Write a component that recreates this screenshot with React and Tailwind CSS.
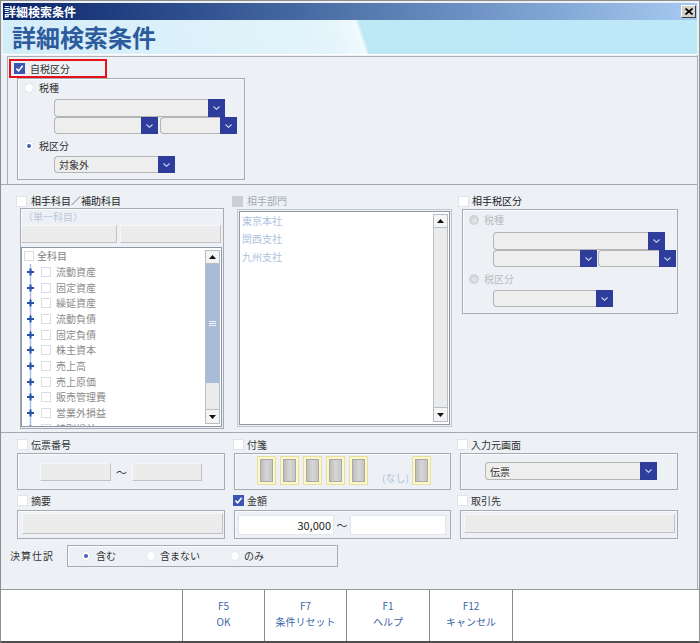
import React from 'react';

const Check = ({ checked, disabled }) => {
  if (checked) {
    return (
      <span className="w-[11px] h-[11px] shrink-0 bg-[#3c54b2] flex items-center justify-center">
        <svg width="9" height="9" viewBox="0 0 9 9">
          <polyline points="1.4,4.6 3.6,6.9 7.7,1.8" fill="none" stroke="#fff" strokeWidth="1.6" />
        </svg>
      </span>
    );
  }
  return (
    <span
      className={
        disabled
          ? 'w-[11px] h-[11px] shrink-0 bg-[#cbced2]'
          : 'w-[11px] h-[11px] shrink-0 bg-white border border-[#e0e3e8]'
      }
    />
  );
};

const Radio = ({ checked, disabled }) => (
  <span
    className={
      disabled
        ? 'w-[10px] h-[10px] shrink-0 rounded-full bg-[#d2d4d8] flex items-center justify-center'
        : 'w-[10px] h-[10px] shrink-0 rounded-full bg-white border border-[#e3e6ea] flex items-center justify-center'
    }
  >
    {checked && <span className="w-[4px] h-[4px] rounded-full bg-[#4a5cb8]" />}
    {disabled && <span className="w-[5px] h-[5px] rounded-full bg-[#e1e2e5]" />}
  </span>
);

const Label = ({ children, className = '' }) => (
  <span className={`text-[10px] leading-[12px] whitespace-nowrap ${className}`}>{children}</span>
);

const Combo = ({ className, text }) => (
  <div className={`flex ${className}`}>
    <div className="flex-1 min-w-0 bg-[#eeeeee] border border-r-0 border-[#b4b4b4] rounded-l-[4px] pl-[4px] flex items-center text-[10px] text-[#333]">
      {text}
    </div>
    <div className="w-[17px] shrink-0 bg-[#2e3d9c] flex items-center justify-center">
      <svg width="7" height="4" viewBox="0 0 7 4">
        <polyline points="0.5,0.5 3.5,3.3 6.5,0.5" fill="none" stroke="#cfd6f2" strokeWidth="1.1" />
      </svg>
    </div>
  </div>
);

const Group = ({ className, children }) => (
  <div className={`border border-[#a5abb2] shadow-[inset_1px_1px_0_#fbfcfd] ${className}`}>{children}</div>
);

const GrayInput = ({ className }) => (
  <div className={`bg-[#ececec] border border-[#f7f7f7] border-r-[#c2c2c2] border-b-[#c2c2c2] ${className}`} />
);

const Arrow = ({ up }) => (
  <svg width="7" height="4" viewBox="0 0 7 4">
    <polygon points={up ? '0,4 7,4 3.5,0' : '0,0 7,0 3.5,4'} fill="#111" />
  </svg>
);

const ScrollBar = ({ thumb }) => (
  <div className="w-[15px] my-[2px] mr-[1px] border border-[#b7bec7] bg-[#ebebeb] flex flex-col">
    <div className="h-[13px] border-b border-[#b7bec7] bg-[#f4f4f4] flex items-center justify-center">
      <Arrow up />
    </div>
    {thumb ? (
      <>
        <div className="h-[119px] bg-[#a9bcd7] flex flex-col items-center justify-center gap-[1px]">
          <span className="w-[7px] h-px bg-[#eef3fa]" />
          <span className="w-[7px] h-px bg-[#eef3fa]" />
          <span className="w-[7px] h-px bg-[#eef3fa]" />
        </div>
        <div className="flex-1" />
      </>
    ) : (
      <div className="flex-1" />
    )}
    <div className="h-[14px] border-t border-[#b7bec7] bg-[#f4f4f4] flex items-center justify-center">
      <Arrow />
    </div>
  </div>
);

const Tag = () => (
  <div className="w-[19px] h-[29px] bg-[#fcf8c8] border border-[#e6dea2] p-[2px]">
    <div className="h-full bg-linear-to-r from-[#bdbdbd] via-[#d6d6d6] to-[#c6c6c6] border border-[#a9a9a9]" />
  </div>
);

const accounts = [
  '流動資産',
  '固定資産',
  '繰延資産',
  '流動負債',
  '固定負債',
  '株主資本',
  '売上高',
  '売上原価',
  '販売管理費',
  '営業外損益',
  '特別損益',
];

const footerButtons = [
  { key: 'F5', label: 'OK', w: 'w-[82px]' },
  { key: 'F7', label: '条件リセット', w: 'w-[82px]' },
  { key: 'F1', label: 'ヘルプ', w: 'w-[83px]' },
  { key: 'F12', label: 'キャンセル', w: 'w-[83px]' },
];

export default function App() {
  return (
    <div className="w-[700px] h-[643px] bg-[#edf1f5] border border-[#8f8f8f] border-b-2 border-b-[#4f4f4f] flex flex-col overflow-hidden font-['Noto_Sans_CJK_JP','Noto_Sans',sans-serif] text-[#333]">
      {/* title bar */}
      <div className="mx-[2px] mt-[2px] h-[17px] shrink-0 bg-linear-to-r from-[#0a246a] to-[#a6caf0] flex items-center justify-between pl-[1px] pr-[1px]">
        <span className="text-white text-[12px] font-bold leading-[17px]">詳細検索条件</span>
        <div className="w-[15px] h-[13px] bg-[#d4d0c8] border border-t-white border-l-white border-r-[#404040] border-b-[#404040] flex items-center justify-center">
          <svg width="8" height="7" viewBox="0 0 8 7">
            <path d="M0.5 0.5 L7.5 6.5 M7.5 0.5 L0.5 6.5" stroke="#000" strokeWidth="1.6" />
          </svg>
        </div>
      </div>

      {/* header */}
      <div className="mx-[2px] h-[35px] shrink-0 border-b border-white bg-[linear-gradient(72deg,#d3edf9_0%,#e3f4fb_47%,#f1fafd_51.5%,#bfe8f7_52%,#bde8f7_100%)] flex items-center pl-[9px]">
        <span className="text-[24px] font-bold text-[#2d5c9c] leading-none">詳細検索条件</span>
      </div>

      {/* body */}
      <div className="h-[534px] shrink-0 flex flex-col mr-[1px] border-r border-[#a9afb6]">
        {/* section 1 */}
        <div className="h-[129px] pl-[6px] pt-[1px] flex flex-col">
          <div className="flex-1 border-l border-t border-[#a9afb6] flex flex-col">
            <div className="ml-[1px] mt-[2px] w-[98px] h-[19px] border-2 border-[#e3121b] flex items-center pl-[3px] gap-[5px]">
              <Check checked />
              <Label>自税区分</Label>
            </div>
            <Group className="ml-[9px] w-[228px] h-[102px] flex flex-col pl-[6px]">
              <div className="mt-[2px] h-[14px] flex items-center gap-[5px]">
                <Radio />
                <Label>税種</Label>
              </div>
              <Combo className="ml-[30px] mt-[4px] w-[171px] h-[18px]" />
              <div className="ml-[30px] h-[17px] flex gap-[2px]">
                <Combo className="w-[104px] h-[17px]" />
                <Combo className="w-[77px] h-[17px]" />
              </div>
              <div className="mt-[5px] h-[14px] flex items-center gap-[5px]">
                <Radio checked />
                <Label>税区分</Label>
              </div>
              <Combo className="ml-[30px] mt-[3px] w-[121px] h-[17px]" text="対象外" />
            </Group>
          </div>
        </div>

        {/* section 2 */}
        <div className="h-[248px] border-t border-[#a3a9b0] flex">
          {/* accounts */}
          <div className="ml-[15px] w-[209px] flex flex-col">
            <div className="mt-[10px] h-[12px] flex items-center gap-[4px]">
              <Check />
              <Label className="text-[#222]">相手科目／補助科目</Label>
            </div>
            <Group className="ml-[4px] mt-[1px] w-[204px] h-[221px] flex flex-col">
              <div className="h-[16px] pl-[2px] text-[10px] leading-[16px] text-[#b9c8dc]">（単一科目）</div>
              <div className="h-[18px] flex gap-[3px]">
                <GrayInput className="w-[96px] h-[18px]" />
                <GrayInput className="w-[101px] h-[18px]" />
              </div>
              <div className="mt-[4px] h-[180px] mr-[1px] border border-[#8e98a4] bg-white flex">
                <div className="flex-1 overflow-hidden pl-[2px]">
                  <div className="h-[16px] flex items-center gap-[3px]">
                    <span className="w-[10px] h-[10px] border border-[#dadde2] bg-white" />
                    <span className="text-[10px] leading-[12px] text-[#7c7c7c]">全科目</span>
                  </div>
                  {accounts.map((name) => (
                    <div key={name} className="h-[15.7px] flex items-center">
                      <svg width="9" height="16" viewBox="0 0 9 16" className="ml-[2px] shrink-0">
                        <line x1="4.5" y1="0" x2="4.5" y2="16" stroke="#aac0e4" strokeWidth="1.5" />
                        <path d="M4.5 4.5 V11.5 M1 8 H8" stroke="#2553a8" strokeWidth="2" />
                      </svg>
                      <span className="ml-[6px] w-[10px] h-[10px] shrink-0 border border-[#dadde2] bg-white" />
                      <span className="ml-[5px] text-[10px] leading-[12px] text-[#8c8c8c] whitespace-nowrap">{name}</span>
                    </div>
                  ))}
                </div>
                <ScrollBar thumb />
              </div>
            </Group>
          </div>

          {/* departments */}
          <div className="ml-[7px] w-[220px] flex flex-col">
            <div className="mt-[10px] h-[12px] flex items-center gap-[4px]">
              <Check disabled />
              <Label className="text-[#a3abb6]">相手部門</Label>
            </div>
            <div className="ml-[5px] mt-[2px] w-[215px] h-[218px] border border-[#c3c8ce] p-px">
              <div className="h-full border border-[#8f98a3] bg-white flex">
                <div className="flex-1 pl-[2px]">
                  {['東京本社', '関西支社', '九州支社'].map((d) => (
                    <div key={d} className="h-[18px] text-[10px] leading-[18px] text-[#adc2de]">
                      {d}
                    </div>
                  ))}
                </div>
                <ScrollBar />
              </div>
            </div>
          </div>

          {/* tax class */}
          <div className="ml-[6px] w-[220px] flex flex-col">
            <div className="mt-[10px] h-[12px] flex items-center gap-[3px]">
              <Check />
              <Label className="text-[#222]">相手税区分</Label>
            </div>
            <Group className="ml-[4px] mt-[2px] w-[216px] h-[105px] flex flex-col pl-[6px]">
              <div className="mt-[3px] h-[14px] flex items-center gap-[5px]">
                <Radio disabled />
                <Label className="text-[#b9bcc1]">税種</Label>
              </div>
              <Combo className="ml-[24px] mt-[5px] w-[172px] h-[18px]" />
              <div className="ml-[24px] h-[17px] flex gap-[1px]">
                <Combo className="w-[104px] h-[17px]" />
                <Combo className="w-[78px] h-[17px]" />
              </div>
              <div className="mt-[5px] h-[14px] flex items-center gap-[5px]">
                <Radio disabled />
                <Label className="text-[#b9bcc1]">税区分</Label>
              </div>
              <Combo className="ml-[24px] mt-[4px] w-[120px] h-[17px]" />
            </Group>
          </div>
        </div>

        {/* section 3 */}
        <div className="h-[157px] border-t border-[#a3a9b0] flex flex-col">
          <div className="mt-[6px] flex">
            <div className="ml-[16px] w-[208px] flex flex-col">
              <div className="h-[11px] flex items-center gap-[3px]">
                <Check />
                <Label>伝票番号</Label>
              </div>
              <Group className="mt-[3px] h-[37px] flex items-center pl-[22px]">
                <GrayInput className="w-[71px] h-[18px]" />
                <span className="w-[21px] text-center text-[11px] leading-[12px]">～</span>
                <GrayInput className="w-[70px] h-[18px]" />
              </Group>
            </div>
            <div className="ml-[8px] w-[218px] flex flex-col">
              <div className="h-[11px] flex items-center gap-[3px]">
                <Check />
                <Label>付箋</Label>
              </div>
              <Group className="ml-px mt-[3px] w-[217px] h-[37px] flex items-start pt-[2px] pl-[22px]">
                <div className="flex gap-[4px]">
                  <Tag />
                  <Tag />
                  <Tag />
                  <Tag />
                  <Tag />
                </div>
                <span className="ml-[14px] mt-[16px] text-[10px] leading-[12px] text-[#adc2de]">(なし)</span>
                <div className="ml-[3px]">
                  <Tag />
                </div>
              </Group>
            </div>
            <div className="ml-[6px] w-[221px] flex flex-col">
              <div className="h-[11px] flex items-center gap-[3px]">
                <Check />
                <Label>入力元画面</Label>
              </div>
              <Group className="ml-[3px] mt-[3px] w-[218px] h-[37px] pl-[24px] pt-[8px]">
                <Combo className="w-[172px] h-[18px]" text="伝票" />
              </Group>
            </div>
          </div>

          <div className="mt-[5px] flex">
            <div className="ml-[16px] w-[208px] flex flex-col">
              <div className="h-[11px] flex items-center gap-[3px]">
                <Check />
                <Label>摘要</Label>
              </div>
              <Group className="mt-[4px] h-[29px] pl-[4px] pr-[1px] pt-[2px] pb-[4px]">
                <GrayInput className="h-full" />
              </Group>
            </div>
            <div className="ml-[8px] w-[218px] flex flex-col">
              <div className="h-[11px] flex items-center gap-[3px]">
                <Check checked />
                <Label>金額</Label>
              </div>
              <Group className="ml-px mt-[4px] w-[217px] h-[29px] flex items-center pl-[3px]">
                <div className="w-[96px] h-[20px] bg-white border border-[#e2e5e9] text-right pr-[2px] text-[11px] leading-[18px] text-[#222]">
                  30,000
                </div>
                <span className="w-[16px] text-center text-[11px] leading-[12px]">～</span>
                <div className="w-[96px] h-[20px] bg-white border border-[#e2e5e9]" />
              </Group>
            </div>
            <div className="ml-[6px] w-[221px] flex flex-col">
              <div className="h-[11px] flex items-center gap-[3px]">
                <Check />
                <Label>取引先</Label>
              </div>
              <Group className="ml-[3px] mt-[4px] w-[218px] h-[29px] pl-[3px] pr-[2px] pt-[3px] pb-[5px]">
                <GrayInput className="h-full" />
              </Group>
            </div>
          </div>

          <div className="mt-[6px] ml-[9px] flex items-center">
            <span className="w-[57px] text-[10px] leading-[12px] tracking-[1px]">決算仕訳</span>
            <Group className="w-[271px] h-[22px] flex items-center pl-[13px] gap-[30px]">
              <div className="flex items-center gap-[5px]">
                <Radio checked />
                <Label>含む</Label>
              </div>
              <div className="flex items-center gap-[4px]">
                <Radio />
                <Label>含まない</Label>
              </div>
              <div className="flex items-center gap-[4px]">
                <Radio />
                <Label>のみ</Label>
              </div>
            </Group>
          </div>
        </div>
      </div>

      {/* footer */}
      <div className="flex-1 bg-white border-t border-[#9a9a9a] flex">
        <div className="w-[181px]" />
        {footerButtons.map((b) => (
          <div
            key={b.key}
            className={`${b.w} border-l border-[#8c8c8c] flex flex-col items-center justify-center pb-[4px] text-[10px] leading-[16px] text-[#3d66aa]`}
          >
            <span>{b.key}</span>
            <span>{b.label}</span>
          </div>
        ))}
        <div className="flex-1 border-l border-[#8c8c8c]" />
      </div>
    </div>
  );
}
